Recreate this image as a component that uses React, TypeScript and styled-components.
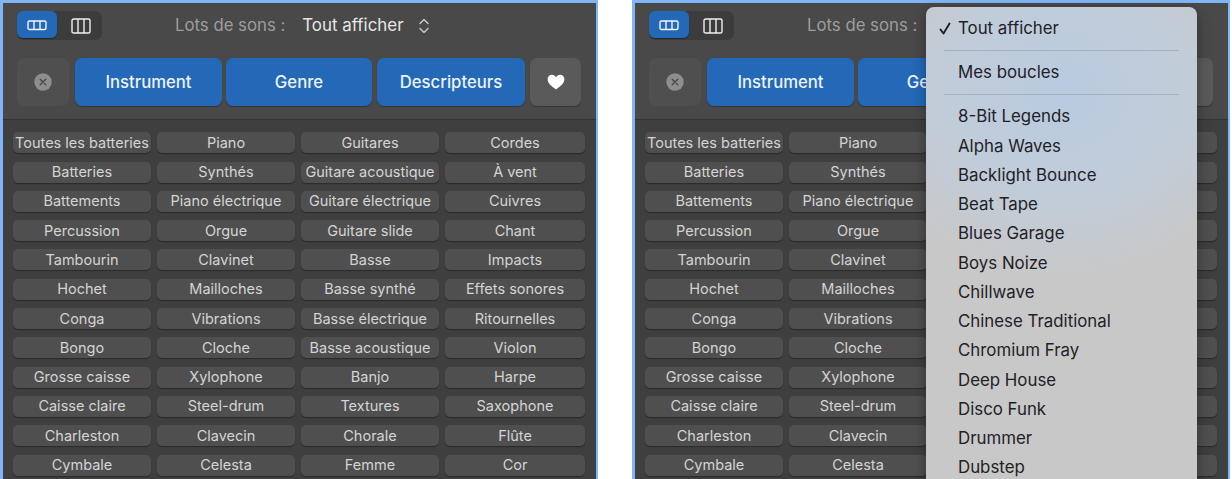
import React from "react";
import styled, { createGlobalStyle } from "styled-components";

const Global = createGlobalStyle`
  html, body { margin: 0; padding: 0; background: #fff; height: 479px; overflow: hidden; }
  body { font-family: Inter, "Liberation Sans", sans-serif; -webkit-font-smoothing: antialiased; }
`;

const Page = styled.div`
  display: flex;
  gap: 34px;
  width: 1232px;
  height: 479px;
  overflow: hidden;
`;

const Panel = styled.section`
  position: relative;
  flex: none;
  width: 598px;
  height: 520px;
  box-sizing: border-box;
  border: solid #80b6f8;
  border-width: 3px 2px 0 3px;
  background: #3f3f3f;
`;

const Header = styled.header`
  height: 117px;
  box-sizing: border-box;
  background: #494949;
  border-bottom: 1px solid #333;
  padding: 8px 0 0 14px;
`;

const TopRow = styled.div`
  display: flex;
  align-items: center;
  height: 29px;
`;

const Segmented = styled.div`
  display: flex;
  flex: none;
  width: 85px;
  height: 29px;
  border-radius: 7px;
  background: #3c3c3c;
`;

const Segment = styled.div<{ $active?: boolean }>`
  display: flex;
  flex: none;
  align-items: center;
  justify-content: center;
  width: ${(p) => (p.$active ? "40px" : "47px")};
  height: ${(p) => (p.$active ? "27px" : "29px")};
  border-radius: 6px;
  background: ${(p) => (p.$active ? "#2369b8" : "transparent")};
  box-shadow: ${(p) => (p.$active ? "0 1px 1px rgba(0,0,0,.35)" : "none")};
`;

const Label = styled.span`
  margin-left: 73px;
  padding-bottom: 2px;
  font-size: 16.75px;
  color: #9d9d9d;
  white-space: nowrap;
`;

const Value = styled.span`
  margin-left: 17px;
  padding-bottom: 2px;
  font-size: 16.9px;
  color: #e6e6e6;
  white-space: nowrap;
`;

const Stepper = styled.svg`
  margin-left: 14px;
  width: 12px;
  height: 18px;
`;

const FilterRow = styled.div`
  display: flex;
  margin-top: 18px;
  height: 48px;
`;

const IconButton = styled.div<{ $dim?: boolean; $ml?: number }>`
  display: flex;
  align-items: center;
  justify-content: center;
  flex: none;
  width: ${(p) => (p.$dim ? 52 : 51)}px;
  height: 48px;
  margin-left: ${(p) => p.$ml ?? 0}px;
  border-radius: 7px;
  background: ${(p) => (p.$dim ? "#4f4f4f" : "#5a5a5a")};
  box-shadow: ${(p) => (p.$dim ? "none" : "0 1px 1px rgba(0,0,0,.3)")};
`;

const FilterButton = styled.div<{ $w: number; $ml: number }>`
  display: flex;
  align-items: center;
  justify-content: center;
  flex: none;
  width: ${(p) => p.$w}px;
  margin-left: ${(p) => p.$ml}px;
  border-radius: 7px;
  background: #2369b8;
  box-shadow: 0 1px 1px rgba(0, 0, 0, 0.3);
  color: #eef3fa;
  font-size: 16.7px;
  font-weight: 500;
`;

const Grid = styled.div`
  display: grid;
  grid-template-columns: 138px 138px 138px 140px;
  grid-auto-rows: 21px;
  column-gap: 6px;
  row-gap: 8.3px;
  padding: 12.3px 0 0 10px;
`;

const Tag = styled.div`
  display: flex;
  align-items: center;
  justify-content: center;
  box-sizing: border-box;
  padding-bottom: 1px;
  border-radius: 5px;
  background: #4f4f4f;
  box-shadow: 0 1px 1px rgba(0, 0, 0, 0.35);
  color: #d4d4d4;
  font-size: 14.5px;
  white-space: nowrap;
`;

const Menu = styled.div`
  position: absolute;
  left: 291px;
  top: 4px;
  width: 271px;
  height: 520px;
  box-sizing: border-box;
  padding-top: 7px;
  border-radius: 8px 8px 0 0;
  background: radial-gradient(ellipse 210px 190px at 50% 85px, #b9cbe0 0%, #c1ccd9 55%, #c8c8c8 100%);
  box-shadow: 0 4px 14px rgba(0, 0, 0, 0.35);
  color: #1f2126;
`;

const MenuItem = styled.div`
  position: relative;
  height: 29.25px;
  line-height: 29.25px;
  padding-left: 32px;
  font-size: 16.85px;
  white-space: nowrap;
`;

const Check = styled.svg`
  position: absolute;
  left: 13px;
  top: 8px;
  width: 12px;
  height: 13px;
`;

const MenuDivider = styled.div`
  height: 1px;
  margin: 7px 18px 6.9px;
  background: #a7b0bc;
`;

const rows = [
  ["Toutes les batteries", "Piano", "Guitares", "Cordes"],
  ["Batteries", "Synthés", "Guitare acoustique", "À vent"],
  ["Battements", "Piano électrique", "Guitare électrique", "Cuivres"],
  ["Percussion", "Orgue", "Guitare slide", "Chant"],
  ["Tambourin", "Clavinet", "Basse", "Impacts"],
  ["Hochet", "Mailloches", "Basse synthé", "Effets sonores"],
  ["Conga", "Vibrations", "Basse électrique", "Ritournelles"],
  ["Bongo", "Cloche", "Basse acoustique", "Violon"],
  ["Grosse caisse", "Xylophone", "Banjo", "Harpe"],
  ["Caisse claire", "Steel-drum", "Textures", "Saxophone"],
  ["Charleston", "Clavecin", "Chorale", "Flûte"],
  ["Cymbale", "Celesta", "Femme", "Cor"],
];

const packs = [
  "8-Bit Legends", "Alpha Waves", "Backlight Bounce", "Beat Tape", "Blues Garage", "Boys Noize",
  "Chillwave", "Chinese Traditional", "Chromium Fray", "Deep House", "Disco Funk", "Drummer", "Dubstep",
];

const RowsIcon = () => (
  <svg width="20" height="14" viewBox="0 0 20 14" fill="none" stroke="#f2f6fb" strokeWidth="1.4">
    <rect x="1" y="3" width="18" height="8.5" rx="1.6" />
    <path d="M7 3v8.5M13 3v8.5" />
  </svg>
);

const ColumnsIcon = () => (
  <svg width="20" height="16" viewBox="0 0 20 16" fill="none" stroke="#f0f0f0" strokeWidth="1.4">
    <rect x="1" y="1" width="18" height="14" rx="1.6" />
    <path d="M7 1v14M13 1v14" />
  </svg>
);

const ClearIcon = () => (
  <svg width="18" height="18" viewBox="0 0 18 18">
    <circle cx="9" cy="9" r="8.7" fill="#8e8e8e" />
    <path d="M6.2 6.2l5.6 5.6M11.8 6.2l-5.6 5.6" stroke="#474747" strokeWidth="1.4" strokeLinecap="round" />
  </svg>
);

const HeartIcon = () => (
  <svg width="18" height="16" viewBox="0 0 18 16">
    <path d="M9 15.6C3.6 11.6.6 8.9.6 5.3.6 2.7 2.6.8 5 .8c1.7 0 3.1.9 4 2.4.9-1.5 2.3-2.4 4-2.4 2.4 0 4.4 1.9 4.4 4.5 0 3.6-3 6.3-8.4 10.3z" fill="#fff" />
  </svg>
);

const Content = () => (
  <>
    <Header>
      <TopRow>
        <Segmented>
          <Segment $active><RowsIcon /></Segment>
          <Segment><ColumnsIcon /></Segment>
        </Segmented>
        <Label>Lots de sons :</Label>
        <Value>Tout afficher</Value>
        <Stepper viewBox="0 0 12 18" fill="none" stroke="#c4c4c4" strokeWidth="1.5" strokeLinecap="round" strokeLinejoin="round">
          <path d="M2 6.5L6 2.5l4 4M2 11.5l4 4 4-4" />
        </Stepper>
      </TopRow>
      <FilterRow>
        <IconButton $dim><ClearIcon /></IconButton>
        <FilterButton $w={147} $ml={6}>Instrument</FilterButton>
        <FilterButton $w={146} $ml={4}>Genre</FilterButton>
        <FilterButton $w={148} $ml={5}>Descripteurs</FilterButton>
        <IconButton $ml={5}><HeartIcon /></IconButton>
      </FilterRow>
    </Header>
    <Grid>
      {rows.flat().map((t) => <Tag key={t}>{t}</Tag>)}
    </Grid>
  </>
);

export default function App() {
  return (
    <Page>
      <Global />
      <Panel><Content /></Panel>
      <Panel>
        <Content />
        <Menu>
          <MenuItem>
            <Check viewBox="0 0 12 13" fill="none" stroke="#1f2126" strokeWidth="1.9" strokeLinecap="round" strokeLinejoin="round">
              <path d="M1.5 7.5l3 4L10.5 1.5" />
            </Check>
            Tout afficher
          </MenuItem>
          <MenuDivider />
          <MenuItem>Mes boucles</MenuItem>
          <MenuDivider />
          {packs.map((p) => <MenuItem key={p}>{p}</MenuItem>)}
        </Menu>
      </Panel>
    </Page>
  );
}
